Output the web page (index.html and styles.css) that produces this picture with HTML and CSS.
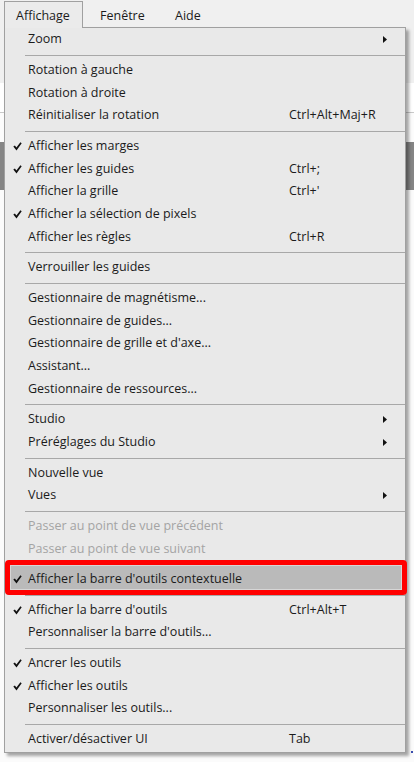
FILE: index.html
```html
<!DOCTYPE html>
<html lang="fr">
<head>
<meta charset="utf-8">
<title>Affichage</title>
<link rel="stylesheet" href="styles.css">
</head>
<body>
<div class="app">
  <div class="menubar">
    <div class="mb-item active">Affichage</div>
    <div class="mb-item fen">Fenêtre</div>
    <div class="mb-item">Aide</div>
  </div>
  <div class="app-top"></div>
  <div class="app-band"></div>
  <div class="app-gap"></div>
  <div class="app-dark"></div>
  <div class="app-rest"></div>
</div>

<div class="menu">
  <div class="mi"><span class="ck"></span><span class="lb">Zoom</span><span class="sc"></span><span class="ar"><svg width="4" height="7" viewBox="0 0 4 7"><polygon points="0,0 4,3.5 0,7" fill="#111"/></svg></span></div>
  <div class="sep"></div>
  <div class="mi"><span class="ck"></span><span class="lb">Rotation à gauche</span><span class="sc"></span><span class="ar"></span></div>
  <div class="mi"><span class="ck"></span><span class="lb">Rotation à droite</span><span class="sc"></span><span class="ar"></span></div>
  <div class="mi"><span class="ck"></span><span class="lb">Réinitialiser la rotation</span><span class="sc">Ctrl+Alt+Maj+R</span><span class="ar"></span></div>
  <div class="sep"></div>
  <div class="mi"><span class="ck"><svg width="9" height="9" viewBox="0 0 9 9"><path d="M0.3 4.6 L1.9 3.6 L3.4 5.6 L7.4 0.3 L8.7 1.3 L3.5 8.6 Z" fill="#111"/></svg></span><span class="lb">Afficher les marges</span><span class="sc"></span><span class="ar"></span></div>
  <div class="mi"><span class="ck"><svg width="9" height="9" viewBox="0 0 9 9"><path d="M0.3 4.6 L1.9 3.6 L3.4 5.6 L7.4 0.3 L8.7 1.3 L3.5 8.6 Z" fill="#111"/></svg></span><span class="lb">Afficher les guides</span><span class="sc">Ctrl+;</span><span class="ar"></span></div>
  <div class="mi"><span class="ck"></span><span class="lb">Afficher la grille</span><span class="sc">Ctrl+'</span><span class="ar"></span></div>
  <div class="mi"><span class="ck"><svg width="9" height="9" viewBox="0 0 9 9"><path d="M0.3 4.6 L1.9 3.6 L3.4 5.6 L7.4 0.3 L8.7 1.3 L3.5 8.6 Z" fill="#111"/></svg></span><span class="lb">Afficher la sélection de pixels</span><span class="sc"></span><span class="ar"></span></div>
  <div class="mi"><span class="ck"></span><span class="lb">Afficher les règles</span><span class="sc">Ctrl+R</span><span class="ar"></span></div>
  <div class="sep"></div>
  <div class="mi"><span class="ck"></span><span class="lb">Verrouiller les guides</span><span class="sc"></span><span class="ar"></span></div>
  <div class="sep"></div>
  <div class="mi"><span class="ck"></span><span class="lb">Gestionnaire de magnétisme...</span><span class="sc"></span><span class="ar"></span></div>
  <div class="mi"><span class="ck"></span><span class="lb">Gestionnaire de guides...</span><span class="sc"></span><span class="ar"></span></div>
  <div class="mi"><span class="ck"></span><span class="lb">Gestionnaire de grille et d'axe...</span><span class="sc"></span><span class="ar"></span></div>
  <div class="mi"><span class="ck"></span><span class="lb">Assistant...</span><span class="sc"></span><span class="ar"></span></div>
  <div class="mi"><span class="ck"></span><span class="lb">Gestionnaire de ressources...</span><span class="sc"></span><span class="ar"></span></div>
  <div class="sep"></div>
  <div class="mi"><span class="ck"></span><span class="lb">Studio</span><span class="sc"></span><span class="ar"><svg width="4" height="7" viewBox="0 0 4 7"><polygon points="0,0 4,3.5 0,7" fill="#111"/></svg></span></div>
  <div class="mi"><span class="ck"></span><span class="lb">Préréglages du Studio</span><span class="sc"></span><span class="ar"><svg width="4" height="7" viewBox="0 0 4 7"><polygon points="0,0 4,3.5 0,7" fill="#111"/></svg></span></div>
  <div class="sep"></div>
  <div class="mi"><span class="ck"></span><span class="lb">Nouvelle vue</span><span class="sc"></span><span class="ar"></span></div>
  <div class="mi"><span class="ck"></span><span class="lb">Vues</span><span class="sc"></span><span class="ar"><svg width="4" height="7" viewBox="0 0 4 7"><polygon points="0,0 4,3.5 0,7" fill="#111"/></svg></span></div>
  <div class="sep"></div>
  <div class="mi dis"><span class="ck"></span><span class="lb">Passer au point de vue précédent</span><span class="sc"></span><span class="ar"></span></div>
  <div class="mi dis"><span class="ck"></span><span class="lb">Passer au point de vue suivant</span><span class="sc"></span><span class="ar"></span></div>
  <div class="sep"></div>
  <div class="mi hl"><span class="ck"><svg width="9" height="9" viewBox="0 0 9 9"><path d="M0.3 4.6 L1.9 3.6 L3.4 5.6 L7.4 0.3 L8.7 1.3 L3.5 8.6 Z" fill="#111"/></svg></span><span class="lb">Afficher la barre d'outils contextuelle</span><span class="sc"></span><span class="ar"></span></div>
  <div class="sep"></div>
  <div class="mi"><span class="ck"><svg width="9" height="9" viewBox="0 0 9 9"><path d="M0.3 4.6 L1.9 3.6 L3.4 5.6 L7.4 0.3 L8.7 1.3 L3.5 8.6 Z" fill="#111"/></svg></span><span class="lb">Afficher la barre d'outils</span><span class="sc">Ctrl+Alt+T</span><span class="ar"></span></div>
  <div class="mi"><span class="ck"></span><span class="lb">Personnaliser la barre d'outils...</span><span class="sc"></span><span class="ar"></span></div>
  <div class="sep"></div>
  <div class="mi"><span class="ck"><svg width="9" height="9" viewBox="0 0 9 9"><path d="M0.3 4.6 L1.9 3.6 L3.4 5.6 L7.4 0.3 L8.7 1.3 L3.5 8.6 Z" fill="#111"/></svg></span><span class="lb">Ancrer les outils</span><span class="sc"></span><span class="ar"></span></div>
  <div class="mi"><span class="ck"><svg width="9" height="9" viewBox="0 0 9 9"><path d="M0.3 4.6 L1.9 3.6 L3.4 5.6 L7.4 0.3 L8.7 1.3 L3.5 8.6 Z" fill="#111"/></svg></span><span class="lb">Afficher les outils</span><span class="sc"></span><span class="ar"></span></div>
  <div class="mi"><span class="ck"></span><span class="lb">Personnaliser les outils...</span><span class="sc"></span><span class="ar"></span></div>
  <div class="sep"></div>
  <div class="mi"><span class="ck"></span><span class="lb">Activer/désactiver UI</span><span class="sc">Tab</span><span class="ar"></span></div>
</div>
<span class="dot"></span>
</body>
</html>
```

FILE: styles.css
```css
html, body {
  margin: 0;
  padding: 0;
}
body {
  width: 414px;
  height: 762px;
  overflow: hidden;
  position: relative;
  font-family: "Open Sans", "Noto Sans", "Liberation Sans", sans-serif;
  font-size: 12.5px;
  color: #1b1b1b;
  background: #fbfbfb;
}
.app {
  display: flex;
  flex-direction: column;
  height: 762px;
}
.menubar {
  height: 27px;
  background: #f0f0f0;
  display: flex;
  align-items: flex-start;
  flex-shrink: 0;
}
.mb-item {
  padding-left: 17px;
  height: 27px;
  margin-top: 1px;
  display: flex;
  align-items: center;
  padding-top: 1px;
  box-sizing: border-box;
  white-space: nowrap;
}
.mb-item.active {
  margin-left: 4px;
  width: 79px;
  padding-left: 11px;
  border: 1px solid #a0a0a0;
  border-bottom: none;
  background: #ebebeb;
  position: relative;
  z-index: 2;
}
.mb-item.fen {
  width: 75px;
}
.app-top {
  height: 56px;
  background: #f0f0f0;
}
.app-band {
  height: 29px;
  background: #ffffff;
  border-bottom: 1px solid #c9c9c9;
}
.app-gap {
  height: 29px;
  background: #fcfcfc;
}
.app-dark {
  height: 48px;
  background: #858585;
}
.app-rest {
  flex: 1;
  background: #fbfbfb;
}
.menu {
  position: absolute;
  top: 27px;
  left: 4px;
  width: 402px;
  box-sizing: border-box;
  border: 1px solid #a0a0a0;
  background: #e9e9e9;
  padding: 1px 0 1px;
  box-shadow: 3px 3px 3px rgba(0, 0, 0, 0.35);
  z-index: 1;
}
.mi {
  display: grid;
  grid-template-columns: 23px 261px 1fr 30px;
  align-items: center;
  height: 22.75px;
  box-sizing: border-box;
  padding-bottom: 3px;
  white-space: nowrap;
}
.ck {
  display: flex;
  justify-content: center;
  align-items: center;
  padding-left: 1px;
  padding-top: 2px;
}
.ck svg, .ar svg {
  display: block;
}
.ar {
  padding-left: 8px;
  padding-top: 2px;
}
.dis {
  color: #a4a4a4;
}
.sep {
  height: 1px;
  background: #a8a8a8;
  margin: 3px 0 3.75px 20px;
}
.mi.hl {
  position: relative;
  z-index: 0;
}
.mi.hl::after {
  content: "";
  position: absolute;
  top: -9px;
  bottom: -3px;
  left: 0;
  right: -2px;
  border: 5px solid #ff0000;
  border-radius: 4px;
  background: #bababa;
  box-shadow: inset 0 0 0 1px #d6d6d6;
  z-index: -1;
}
.dot {
  position: absolute;
  left: 411px;
  top: 751px;
  width: 2px;
  height: 2px;
  background: #3b4fb0;
}
```
